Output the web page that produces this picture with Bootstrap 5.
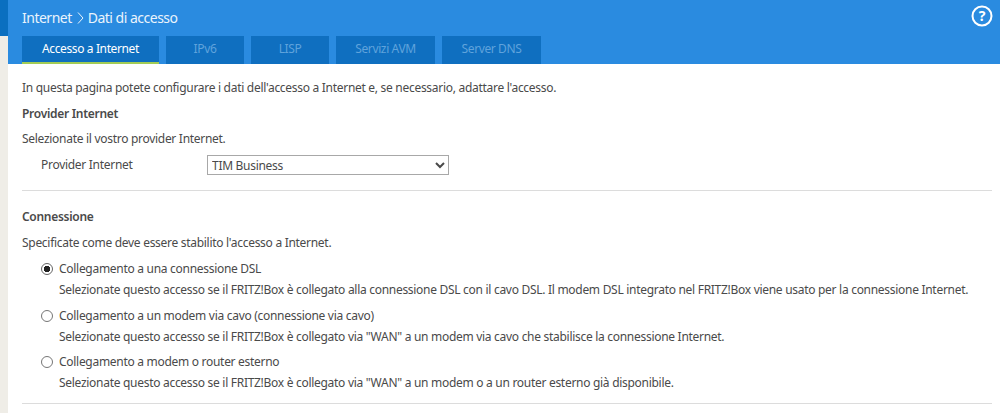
<!DOCTYPE html>
<html lang="it">
<head>
  <meta charset="UTF-8">
  <title>Dati di accesso</title>
  <link rel="stylesheet" href="https://cdn.jsdelivr.net/npm/bootstrap@5.3.5/dist/css/bootstrap.min.css">
  <style>
    html, body { height: 100%; overflow: hidden; }
    body { font-family: "Noto Sans", "Open Sans", sans-serif; font-size: 12px; letter-spacing: -.29px; color: #4a4a4a; background: #fff; }
    .side-strip { width: 8px; flex: none; background: linear-gradient(#0a6fc0 0, #0a6fc0 36px, #efede7 36px); }
    .page-head { background: #2a8be0; height: 64px; padding: 8px 0 0 14px; }
    .page-title { font-size: 14px; letter-spacing: -.5px; line-height: 20px; color: #eaf4fc; }
    .title-sep { width: 7px; height: 12px; margin: 0 4px 0 5px; }
    .help-icon { position: absolute; top: 5px; right: 7px; width: 22px; height: 22px; }
    .tab-row { margin-top: 8px; gap: 7px; }
    .fb-tab { height: 28px; line-height: 26px; background: #0f6fc0; color: #5fa3dc; text-align: center; letter-spacing: -.38px; }
    .fb-tab.on { color: #fff; border-bottom: 2px solid #a2cc55; }
    .tab-xl { width: 137px; }
    .tab-s { width: 78px; }
    .tab-m { width: 99px; }
    .page-body { padding: 14px 8px 0 14px; }
    .fb-line { line-height: 20px; margin-bottom: 6px; }
    .fb-head { font-weight: 600; }
    .fb-head-tight { margin-bottom: 5px; }
    .fb-rule { height: 1px; background: #dcdcdc; }
    .fb-rule-top { margin: 15px 0 16px; }
    .field-row { padding-left: 19px; }
    .field-label { width: 166px; }
    .fb-select { width: 242px; height: 20px; border: 1px solid #a8a8a8; background: #fff; color: inherit; font: inherit; letter-spacing: inherit; padding: 0; }
    .opt-group { padding-left: 19px; margin-bottom: 9px; }
    .opt-row { gap: 6px; margin-bottom: 4.5px; }
    .opt-row .fb-line { margin-bottom: 1px; }
    .fb-radio.form-check-input { width: 12px; height: 12px; margin: 4px 0 0; flex: none; border: 1px solid #767676; }
    .fb-radio.form-check-input:checked { background-color: #fff; border-color: #666; background-image: radial-gradient(circle, #222 0, #222 3px, #fff 3.5px); }
  </style>
</head>
<body>
  <div class="d-flex h-100">
    <div class="side-strip"></div>
    <div class="flex-grow-1">
      <div class="page-head position-relative">
        <div class="page-title d-flex align-items-center">
          Internet
          <svg class="title-sep" viewBox="0 0 7 12"><path d="M1 .5 6 6 1 11.5" fill="none" stroke="#eaf4fc" stroke-width="1"/></svg>
          Dati di accesso
        </div>
        <svg class="help-icon" viewBox="0 0 22 22">
          <circle cx="11" cy="11" r="9.5" fill="none" stroke="#fff" stroke-width="2"/>
          <text x="11" y="16" text-anchor="middle" fill="#fff" font-family="Noto Sans, sans-serif" font-size="14" font-weight="700">?</text>
        </svg>
        <div class="d-flex tab-row">
          <div class="fb-tab tab-xl on">Accesso a Internet</div>
          <div class="fb-tab tab-s">IPv6</div>
          <div class="fb-tab tab-s">LISP</div>
          <div class="fb-tab tab-m">Servizi AVM</div>
          <div class="fb-tab tab-m">Server DNS</div>
        </div>
      </div>
      <div class="page-body">
        <div class="fb-line">In questa pagina potete configurare i dati dell'accesso a Internet e, se necessario, adattare l'accesso.</div>
        <div class="fb-line fb-head fb-head-tight">Provider Internet</div>
        <div class="fb-line">Selezionate il vostro provider Internet.</div>
        <div class="d-flex align-items-center field-row">
          <label class="field-label" for="provider">Provider Internet</label>
          <select class="fb-select" id="provider"><option>TIM Business</option></select>
        </div>
        <div class="fb-rule fb-rule-top"></div>
        <div class="fb-line fb-head">Connessione</div>
        <div class="fb-line">Specificate come deve essere stabilito l'accesso a Internet.</div>
        <div class="opt-group">
          <div class="d-flex opt-row">
            <input class="form-check-input fb-radio" type="radio" name="conn" id="c1" checked>
            <div>
              <label class="fb-line d-block" for="c1">Collegamento a una connessione DSL</label>
              <div class="fb-line">Selezionate questo accesso se il FRITZ!Box è collegato alla connessione DSL con il cavo DSL. Il modem DSL integrato nel FRITZ!Box viene usato per la connessione Internet.</div>
            </div>
          </div>
          <div class="d-flex opt-row">
            <input class="form-check-input fb-radio" type="radio" name="conn" id="c2">
            <div>
              <label class="fb-line d-block" for="c2">Collegamento a un modem via cavo (connessione via cavo)</label>
              <div class="fb-line">Selezionate questo accesso se il FRITZ!Box è collegato via "WAN" a un modem via cavo che stabilisce la connessione Internet.</div>
            </div>
          </div>
          <div class="d-flex opt-row">
            <input class="form-check-input fb-radio" type="radio" name="conn" id="c3">
            <div>
              <label class="fb-line d-block" for="c3">Collegamento a modem o router esterno</label>
              <div class="fb-line">Selezionate questo accesso se il FRITZ!Box è collegato via "WAN" a un modem o a un router esterno già disponibile.</div>
            </div>
          </div>
        </div>
        <div class="fb-rule"></div>
      </div>
    </div>
  </div>
  <script src="https://cdn.jsdelivr.net/npm/bootstrap@5.3.5/dist/js/bootstrap.bundle.min.js"></script>
</body>
</html>
